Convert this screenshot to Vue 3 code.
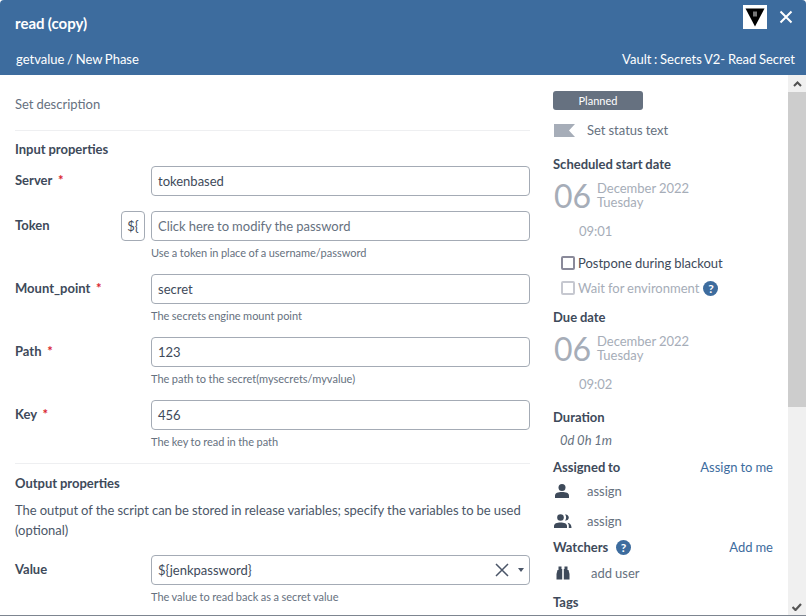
<script setup>
const fields = [
  { label: 'Mount_point', req: true, value: 'secret', help: 'The secrets engine mount point' },
  { label: 'Path', req: true, value: '123', help: 'The path to the secret(mysecrets/myvalue)' },
  { label: 'Key', req: true, value: '456', help: 'The key to read in the path' },
]
</script>

<template>
  <div class="window">
    <header class="head">
      <div class="head-top">
        <h1 class="title">read (copy)</h1>
        <div class="head-actions">
          <span class="logo">
            <svg width="24" height="24" viewBox="0 0 24 24">
              <rect width="24" height="24" fill="#fff" />
              <path d="M2.500 3.500H21.500L12 21.500Z" fill="#000" />
              <rect x="10" y="6.500" width="4" height="5" fill="#777" />
            </svg>
          </span>
          <svg class="close" width="14" height="14" viewBox="0 0 14 14">
            <path d="M1.500 1.500L12.500 12.500M12.500 1.500L1.500 12.500" stroke="#fff" stroke-width="2" fill="none" />
          </svg>
        </div>
      </div>
      <div class="head-bottom">
        <span>getvalue / New Phase</span>
        <span>Vault : Secrets V2- Read Secret</span>
      </div>
    </header>

    <div class="body">
      <main class="left">
        <div class="desc">Set description</div>
        <hr class="rule" />
        <h2 class="section first">Input properties</h2>

        <div class="field">
          <label class="lbl">Server <i>*</i></label>
          <div class="ctl">
            <div class="input">tokenbased</div>
          </div>
        </div>

        <div class="field">
          <label class="lbl token-lbl">Token <span class="var">${</span></label>
          <div class="ctl">
            <div class="input ph">Click here to modify the password</div>
            <div class="help">Use a token in place of a username/password</div>
          </div>
        </div>

        <div v-for="f in fields" :key="f.label" class="field">
          <label class="lbl">{{ f.label }} <i v-if="f.req">*</i></label>
          <div class="ctl">
            <div class="input">{{ f.value }}</div>
            <div class="help">{{ f.help }}</div>
          </div>
        </div>

        <hr class="rule rule2" />
        <h2 class="section">Output properties</h2>
        <p class="para">The output of the script can be stored in release variables; specify the variables to be used (optional)</p>

        <div class="field">
          <label class="lbl">Value</label>
          <div class="ctl">
            <div class="input select">
              <span>${jenkpassword}</span>
              <span class="sel-icons">
                <svg width="14" height="14" viewBox="0 0 14 14">
                  <path d="M1 1L13 13M13 1L1 13" stroke="#4a5568" stroke-width="1.500" fill="none" />
                </svg>
                <svg width="6" height="4" viewBox="0 0 6 4"><path d="M0 0H6L3 4Z" fill="#4a5568" /></svg>
              </span>
            </div>
            <div class="help">The value to read back as a secret value</div>
          </div>
        </div>
      </main>

      <aside class="right">
        <div class="badge">Planned</div>
        <div class="status">
          <svg width="21" height="13" viewBox="0 0 21 13"><path d="M0 0H21L15 6.500L21 13H0Z" fill="#a6adb8" /></svg>
          <span>Set status text</span>
        </div>

        <h3 class="h3 sched">Scheduled start date</h3>
        <div class="date">
          <span class="day">06</span>
          <span class="dm">December 2022<br />Tuesday</span>
        </div>
        <div class="time">09:01</div>

        <div class="check c1"><span class="box"></span>Postpone during blackout</div>
        <div class="check c2 off">
          <span class="box"></span>Wait for environment
          <span class="q">?</span>
        </div>

        <h3 class="h3 due">Due date</h3>
        <div class="date">
          <span class="day">06</span>
          <span class="dm">December 2022<br />Tuesday</span>
        </div>
        <div class="time">09:02</div>

        <h3 class="h3 dur">Duration</h3>
        <div class="durv">0d 0h 1m</div>

        <div class="split assigned">
          <h3 class="h3">Assigned to</h3>
          <a class="link">Assign to me</a>
        </div>
        <div class="person p1">
          <svg width="14" height="14" viewBox="0 0 14 14">
            <circle cx="7" cy="3.500" r="3.500" fill="#3e4a5a" />
            <path d="M0 14V11.500C0 9 3 8 7 8S14 9 14 11.500V14Z" fill="#3e4a5a" />
          </svg>
          <span>assign</span>
        </div>
        <div class="person p2">
          <svg width="18" height="14" viewBox="0 0 18 14">
            <circle cx="6.500" cy="3.500" r="3.300" fill="#3e4a5a" />
            <path d="M0 14V12C0 9.500 3 8.500 6.500 8.500S13 9.500 13 12V14Z" fill="#3e4a5a" />
            <path d="M11 0.500C13 0 14.800 1.500 14.800 3.500S13 7 11 6.500C12.500 5 12.500 2 11 0.500Z" fill="#3e4a5a" />
            <path d="M13.500 8.800C16 9.300 17.500 10.500 17.500 14H14.800V12C14.800 10.800 14.400 9.800 13.500 8.800Z" fill="#3e4a5a" />
          </svg>
          <span>assign</span>
        </div>

        <div class="split watchers">
          <h3 class="h3">Watchers <span class="q">?</span></h3>
          <a class="link">Add me</a>
        </div>
        <div class="person p3">
          <svg width="14" height="14" viewBox="0 0 14 14">
            <path d="M2.500 0.500H5.500V3H6.200V13.500H0.500V8L1.500 4H2.500Z" fill="#3e4a5a" />
            <path d="M11.500 0.500H8.500V3H7.800V13.500H13.500V8L12.500 4H11.500Z" fill="#3e4a5a" />
          </svg>
          <span>add user</span>
        </div>
        <h3 class="h3 tags">Tags</h3>
      </aside>

      <div class="scrollbar">
        <div class="arrow">
          <svg width="9" height="6" viewBox="0 0 9 6"><path d="M1 5L4.500 1.500L8 5" stroke="#505050" stroke-width="2" fill="none" /></svg>
        </div>
        <div class="thumb"></div>
        <div class="track"></div>
        <div class="grip">
          <svg width="10" height="8" viewBox="0 0 10 8">
            <path d="M0.500 4L3.500 7L9 1" stroke="#555" stroke-width="2.200" fill="none" />
          </svg>
        </div>
      </div>
    </div>
  </div>
</template>

<style>
html, body { margin: 0; padding: 0; background: #fff; }
</style>

<style scoped>
.window {
  width: 806px;
  height: 616px;
  box-sizing: border-box;
  display: flex;
  flex-direction: column;
  overflow: hidden;
  font-family: Lato, "Liberation Sans", sans-serif;
  font-size: 13px;
  word-spacing: -0.35px;
  color: #3e4a5a;
  background: #fff;
  border-bottom: 1px solid #7d8590;
  border-radius: 4px 4px 0 0;
}
.head {
  height: 75px;
  flex: none;
  background: #3d6c9e;
  color: #fff;
  padding: 5px 12px 0 16px;
  box-sizing: border-box;
}
.head-top {
  display: flex;
  justify-content: space-between;
  align-items: flex-start;
  height: 45px;
}
.title {
  margin: 9px 0 0 -1px;
  font-size: 15px;
  line-height: 18px;
  font-weight: 700;
}
.head-actions {
  display: flex;
  align-items: center;
  gap: 12px;
}
.logo { display: block; width: 24px; height: 24px; }
.close { display: block; margin-right: 1px; margin-top: -1px; }
.head-bottom {
  display: flex;
  justify-content: space-between;
  font-size: 13px;
  line-height: 18px;
  word-spacing: -0.6px;
  margin-right: -1px;
}
.body {
  flex: 1;
  min-height: 0;
  display: flex;
}
.left {
  width: 515px;
  margin-left: 15px;
  flex: none;
  padding-top: 20px;
}
.desc { line-height: 18px; color: #667180; }
.rule {
  border: 0;
  border-top: 1px solid #eeeff1;
  margin: 17px 0 0;
}
.rule2 { margin-top: 12px; }
.section {
  margin: 10px 0 0;
  font-size: 13px;
  line-height: 18px;
  font-weight: 700;
}
.first { margin-top: 9px; margin-bottom: 8px; }
.field {
  display: flex;
  margin-bottom: 15px;
}
.lbl {
  width: 136px;
  flex: none;
  font-weight: 700;
  line-height: 28px;
  position: relative;
}
.lbl i { color: #d9232e; font-style: normal; margin-left: 3px; }
.var {
  position: absolute;
  left: 106px;
  top: 0;
  width: 22px;
  height: 28px;
  border: 1px solid #a4abb5;
  border-radius: 4px;
  text-align: center;
  font-weight: 400;
  line-height: 28px;
}
.ctl { flex: 1; min-width: 0; }
.input {
  height: 30px;
  box-sizing: border-box;
  border: 1px solid #a4abb5;
  border-radius: 4px;
  padding: 0 6px;
  line-height: 28px;
  font-size: 13px;
  color: #3e4a5a;
}
.ph { color: #667180; }
.select {
  display: flex;
  justify-content: space-between;
  align-items: center;
  padding-right: 5px;
}
.sel-icons { display: flex; align-items: center; gap: 9px; }
.sel-icons svg { display: block; }
.help {
  font-size: 11px;
  line-height: 18px;
  padding-top: 3px;
  margin-bottom: -3px;
  color: #667180;
}
.para {
  margin: 8px 0 15px;
  line-height: 20px;
  color: #4c5768;
}
.right {
  width: 235px;
  margin-left: 23px;
  flex: none;
  padding-top: 16px;
}
.badge {
  width: 90px;
  height: 19px;
  border-radius: 3px;
  background: #667180;
  color: #fff;
  font-size: 11px;
  line-height: 19px;
  text-align: center;
}
.status {
  display: flex;
  align-items: center;
  gap: 12px;
  margin-top: 11px;
  height: 18px;
  color: #667180;
  padding-left: 1px;
}
.h3 {
  margin: 0;
  font-size: 13px;
  line-height: 18px;
  font-weight: 700;
}
.sched { margin-top: 16px; }
.date {
  display: flex;
  align-items: flex-start;
  margin-top: 7px;
  color: #a6adb8;
  height: 36px;
}
.day {
  font-size: 32px;
  line-height: 36px;
  font-weight: 400;
  width: 44px;
  flex: none;
  margin-top: -2px;
  padding-left: 1px;
  box-sizing: border-box;
}
.dm {
  font-size: 13px;
  line-height: 14px;
  margin-top: 1px;
}
.time {
  margin: 6px 0 0 26px;
  line-height: 18px;
  color: #a6adb8;
}
.check {
  display: flex;
  align-items: center;
  height: 18px;
  margin-left: 8px;
  color: #3e4a5a;
}
.c1 { margin-top: 14px; }
.c2 { margin-top: 7px; }
.off { color: #a6adb8; }
.box {
  width: 10px;
  height: 10px;
  border: 2px solid #8a8a9a;
  border-radius: 2px;
  margin-right: 3px;
  flex: none;
}
.off .box { border-color: #c6c8d0; }
.q {
  display: inline-block;
  width: 15px;
  height: 15px;
  border-radius: 50%;
  background: #3d6c9e;
  color: #fff;
  font-size: 12px;
  line-height: 15px;
  font-weight: 700;
  text-align: center;
  margin-left: 5px;
}
.check .q { margin-left: 4px; }
.due { margin-top: 11px; }
.dur { margin-top: 15px; }
.durv {
  margin: 5px 0 0 7px;
  line-height: 18px;
  font-style: italic;
  color: #667180;
}
.split {
  display: flex;
  justify-content: space-between;
  align-items: center;
  padding-right: 15px;
}
.assigned { margin-top: 9px; }
.link { color: #3d6c9e; }
.person {
  display: flex;
  align-items: center;
  height: 18px;
  margin-top: 6px;
  color: #667180;
}
.person svg { flex: none; }
.p1 svg { margin: 0 18px 0 2px; }
.p2 { margin-top: 12px; }
.p2 svg { margin: 0 15px 0 1px; }
.watchers { margin-top: 8px; }
.p3 { margin-top: 8px; }
.p3 svg { margin: 0 21px 0 3px; }
.tags { margin-top: 11px; }
.scrollbar {
  width: 18px;
  margin-left: auto;
  flex: none;
  background: #f0f0f0;
  display: flex;
  flex-direction: column;
}
.arrow {
  height: 17px;
  flex: none;
  display: flex;
  align-items: center;
  justify-content: center;
}
.thumb { height: 315px; flex: none; background: #cdcdcd; }
.track { flex: 1; }
.grip {
  height: 17px;
  flex: none;
  display: flex;
  align-items: center;
  justify-content: center;
}
</style>
